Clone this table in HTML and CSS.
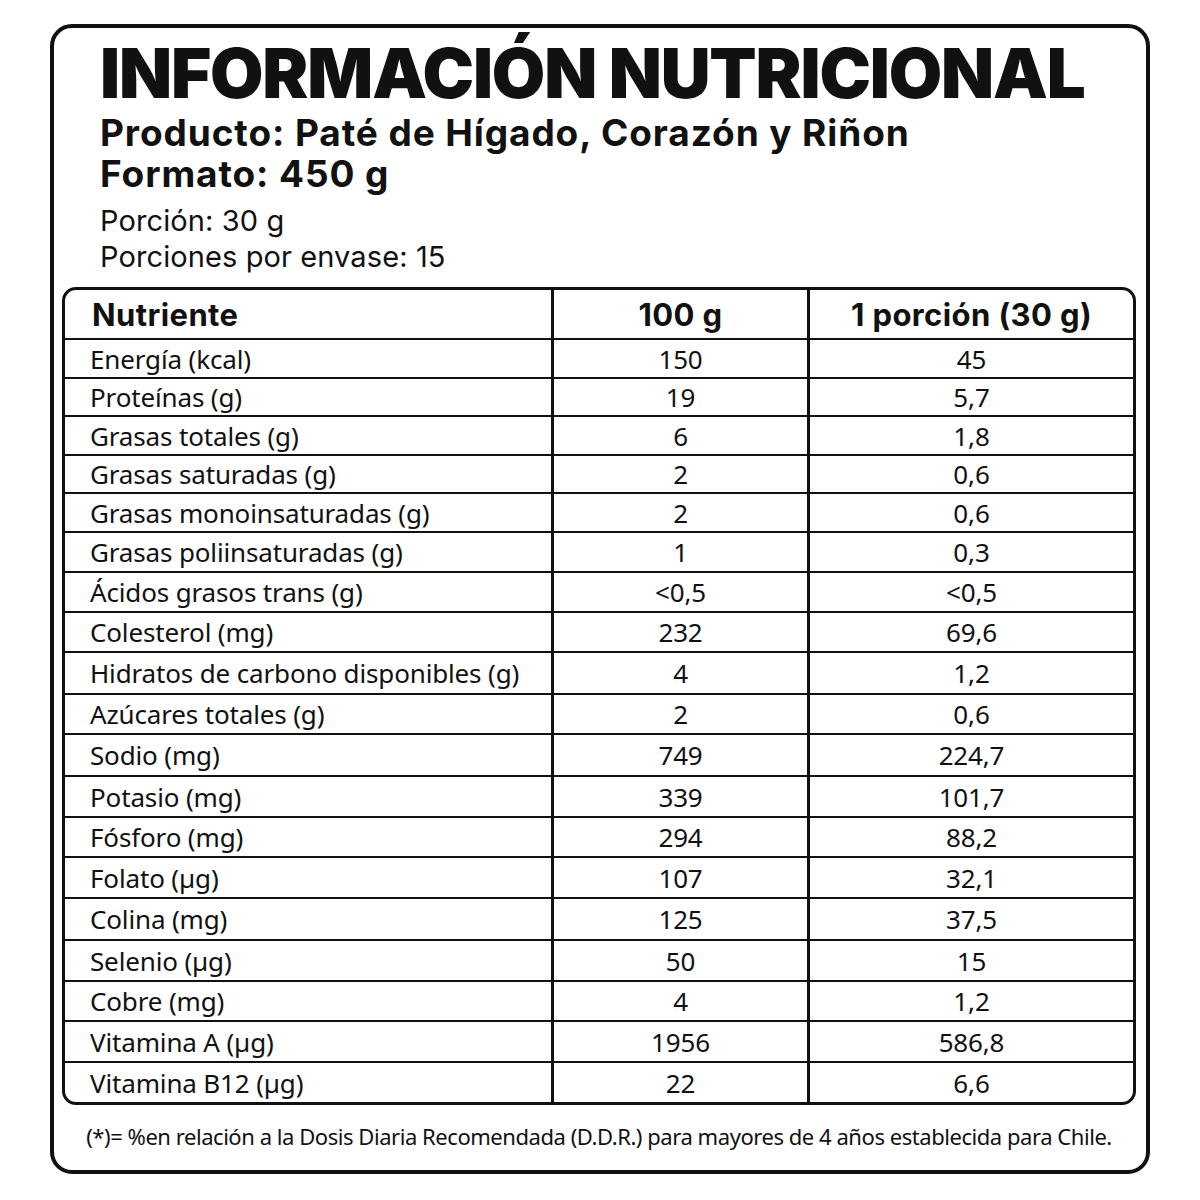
FILE: index.html
```html
<!DOCTYPE html>
<html lang="es">
<head>
<meta charset="utf-8">
<title>Información Nutricional</title>
<link rel="stylesheet" href="styles.css">
</head>
<body>
<div class="card">
  <header class="head">
    <h1 class="title">INFORMACIÓN NUTRICIONAL</h1>
    <p class="prod">Producto: Paté de Hígado, Corazón y Riñon</p>
    <p class="prod">Formato: 450 g</p>
    <p class="por first">Porción: 30 g</p>
    <p class="por">Porciones por envase: 15</p>
  </header>
  <div class="tbl">
    <div class="c h name">Nutriente</div><div class="c h mid">100 g</div><div class="c h end">1 porción (30 g)</div>
    <div class="c name">Energía (kcal)</div><div class="c mid">150</div><div class="c end">45</div>
    <div class="c name">Proteínas (g)</div><div class="c mid">19</div><div class="c end">5,7</div>
    <div class="c name">Grasas totales (g)</div><div class="c mid">6</div><div class="c end">1,8</div>
    <div class="c name">Grasas saturadas (g)</div><div class="c mid">2</div><div class="c end">0,6</div>
    <div class="c name">Grasas monoinsaturadas (g)</div><div class="c mid">2</div><div class="c end">0,6</div>
    <div class="c name">Grasas poliinsaturadas (g)</div><div class="c mid">1</div><div class="c end">0,3</div>
    <div class="c name">Ácidos grasos trans (g)</div><div class="c mid">&lt;0,5</div><div class="c end">&lt;0,5</div>
    <div class="c name">Colesterol (mg)</div><div class="c mid">232</div><div class="c end">69,6</div>
    <div class="c name">Hidratos de carbono disponibles (g)</div><div class="c mid">4</div><div class="c end">1,2</div>
    <div class="c name">Azúcares totales (g)</div><div class="c mid">2</div><div class="c end">0,6</div>
    <div class="c name">Sodio (mg)</div><div class="c mid">749</div><div class="c end">224,7</div>
    <div class="c name">Potasio (mg)</div><div class="c mid">339</div><div class="c end">101,7</div>
    <div class="c name">Fósforo (mg)</div><div class="c mid">294</div><div class="c end">88,2</div>
    <div class="c name">Folato (µg)</div><div class="c mid">107</div><div class="c end">32,1</div>
    <div class="c name">Colina (mg)</div><div class="c mid">125</div><div class="c end">37,5</div>
    <div class="c name">Selenio (µg)</div><div class="c mid">50</div><div class="c end">15</div>
    <div class="c name">Cobre (mg)</div><div class="c mid">4</div><div class="c end">1,2</div>
    <div class="c name">Vitamina A (µg)</div><div class="c mid">1956</div><div class="c end">586,8</div>
    <div class="c name last">Vitamina B12 (µg)</div><div class="c mid last">22</div><div class="c end last">6,6</div>
  </div>
  <p class="foot">(*)= %en relación a la Dosis Diaria Recomendada (D.D.R.) para mayores de 4 años establecida para Chile.</p>
</div>
</body>
</html>
```
FILE: styles.css
```css
html, body {
  margin: 0;
  padding: 0;
  background: #fff;
}
body {
  color: #111;
  font-family: "Noto Sans", "DejaVu Sans", sans-serif;
}
.card {
  box-sizing: border-box;
  width: 1100px;
  height: 1150px;
  margin: 24px 0 0 50px;
  border: 4px solid #111;
  border-radius: 22px;
  padding: 10px 10px 0 8px;
}
.head {
  padding-left: 38px;
}
.title {
  margin: 0;
  font-family: Inter, "Liberation Sans", sans-serif;
  font-weight: 900;
  font-size: 69px;
  line-height: 70px;
  letter-spacing: -1.15px;
  white-space: nowrap;
}
.prod {
  margin: 0;
  font-family: Inter, "Liberation Sans", sans-serif;
  font-weight: 700;
  font-size: 37px;
  line-height: 41px;
  letter-spacing: 0.9px;
  white-space: nowrap;
}
.prod:first-of-type {
  margin-top: 4px;
}
.por {
  margin: 0;
  font-family: Inter, "Liberation Sans", sans-serif;
  font-weight: 400;
  font-size: 29px;
  line-height: 36px;
  letter-spacing: 0.1px;
}
.por.first {
  margin-top: 9px;
}
.tbl {
  box-sizing: border-box;
  margin-top: 12px;
  height: 818px;
  border: 3px solid #111;
  border-radius: 14px;
  overflow: hidden;
  display: grid;
  grid-template-columns: 489px 256px 1fr;
  grid-template-rows: 50px 39px 38px 39px 38px 39px 40px 40px 40px 42px 40px 42px 41px 40px 41px 42px 41px 40px 41px 1fr;
}
.c {
  box-sizing: border-box;
  border-bottom: 2px solid #111;
  display: flex;
  align-items: center;
  font-size: 26px;
  letter-spacing: -0.15px;
  white-space: nowrap;
}
.c.last {
  border-bottom: 0;
}
.name {
  border-right: 3px solid #111;
  padding-left: 25px;
}
.mid {
  border-right: 3px solid #111;
  justify-content: center;
}
.end {
  justify-content: center;
}
.h {
  font-family: Inter, "Liberation Sans", sans-serif;
  font-weight: 700;
  font-size: 31px;
  letter-spacing: 0.4px;
}
.h.name {
  padding-left: 27px;
}
.foot {
  margin: 16px 0 0;
  text-align: center;
  font-size: 22px;
  line-height: 30px;
  letter-spacing: -0.45px;
  white-space: nowrap;
}
```
